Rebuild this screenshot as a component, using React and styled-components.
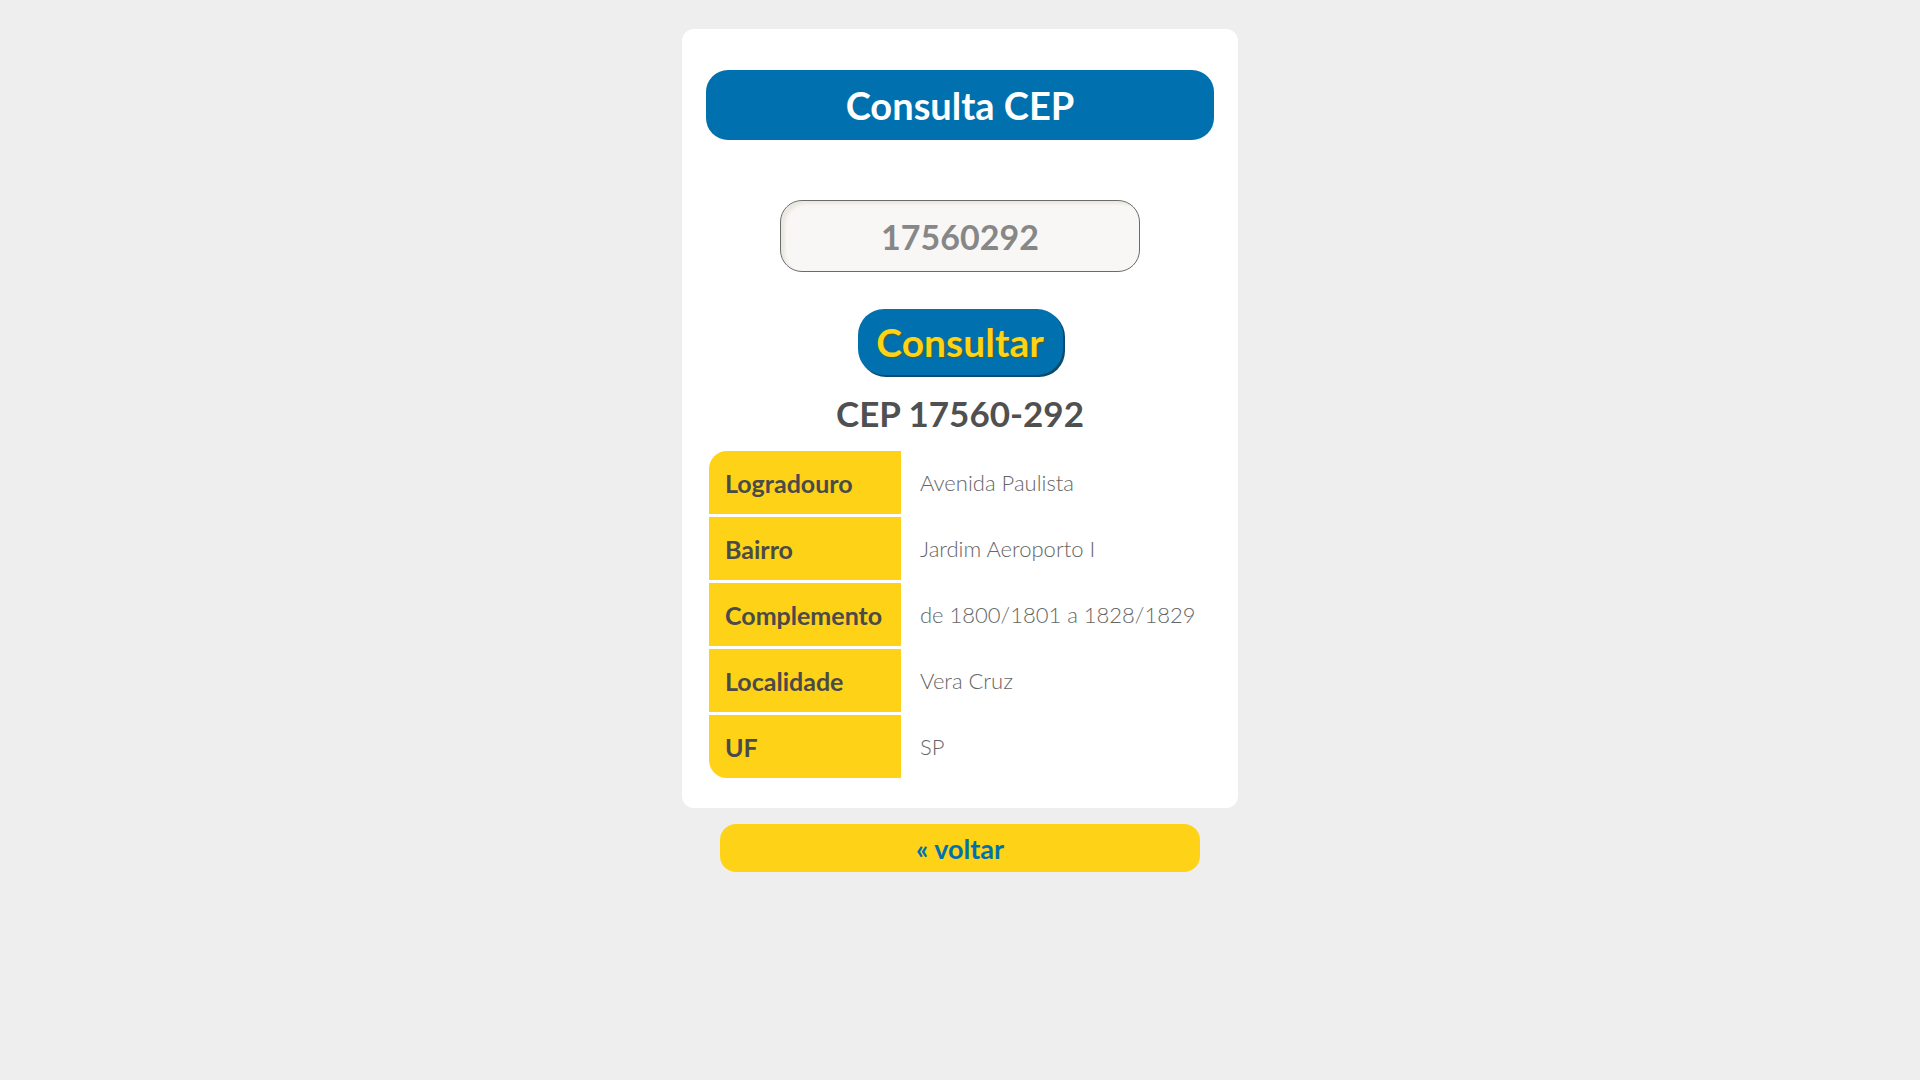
import React from 'react'
import styled, { createGlobalStyle } from 'styled-components'

const GlobalStyle = createGlobalStyle`
  html, body {
    margin: 0;
    padding: 0;
    background: #eeeeee;
    font-family: Lato, "Open Sans", sans-serif;
  }
`

const Page = styled.div`
  min-height: 1080px;
  display: flex;
  flex-direction: column;
  align-items: center;
  padding-top: 29px;
  box-sizing: border-box;
`

const Card = styled.div`
  width: 556px;
  box-sizing: border-box;
  background: #ffffff;
  border-radius: 12px;
  padding: 41px 24px 27px;
  display: flex;
  flex-direction: column;
  align-items: center;
`

const Title = styled.h1`
  margin: 0;
  width: 100%;
  height: 70px;
  border-radius: 22px;
  background: #0071ae;
  color: #ffffff;
  font-size: 38px;
  font-weight: 700;
  display: flex;
  align-items: center;
  justify-content: center;
`

const CepInput = styled.input`
  margin-top: 60px;
  width: 360px;
  height: 72px;
  box-sizing: border-box;
  border: 1px solid #6b6b6b;
  border-radius: 22px;
  background: #f8f7f5;
  box-shadow: inset 4px 3px 3px #ebe8e1;
  text-align: center;
  font-family: inherit;
  font-size: 34px;
  font-weight: 700;
  color: #878787;
  outline: none;
`

const SearchButton = styled.button`
  margin-top: 37px;
  width: 205px;
  height: 66px;
  border: none;
  border-radius: 26px;
  background: #0071ae;
  box-shadow: 2px 2px 0 #0b4a6e;
  color: #fdd217;
  font-family: inherit;
  font-size: 39px;
  font-weight: 700;
  text-shadow: 1px 1px 1px #5a5a20;
  cursor: pointer;
`

const CepHeading = styled.h2`
  margin: 17px 0 14px;
  font-size: 35px;
  font-weight: 700;
  color: #505050;
`

const InfoTable = styled.table`
  width: 100%;
  table-layout: fixed;
  border-spacing: 3px;
`

const LabelCell = styled.th`
  width: 192px;
  height: 63px;
  box-sizing: border-box;
  padding: 0 0 0 16px;
  background: #fdd217;
  color: #4a4a4a;
  font-size: 25px;
  font-weight: 700;
  text-align: left;
  white-space: nowrap;
  border-radius: ${p => p.$first ? '18px 0 0 0' : p.$last ? '0 0 0 18px' : '0'};
`

const ValueCell = styled.td`
  padding: 0 0 0 16px;
  color: #666666;
  font-size: 22px;
  font-weight: 300;
  white-space: nowrap;
`

const BackButton = styled.a`
  margin-top: 16px;
  width: 480px;
  height: 48px;
  border-radius: 16px;
  background: #fdd217;
  color: #0071ae;
  font-size: 27px;
  font-weight: 700;
  display: flex;
  align-items: center;
  justify-content: center;
  text-decoration: none;
  cursor: pointer;
`

const rows = [
  ['Logradouro', 'Avenida Paulista'],
  ['Bairro', 'Jardim Aeroporto I'],
  ['Complemento', 'de 1800/1801 a 1828/1829'],
  ['Localidade', 'Vera Cruz'],
  ['UF', 'SP'],
]

export default function App() {
  return (
    <Page>
      <GlobalStyle />
      <Card>
        <Title>Consulta CEP</Title>
        <CepInput defaultValue="17560292" />
        <SearchButton>Consultar</SearchButton>
        <CepHeading>CEP 17560-292</CepHeading>
        <InfoTable>
          <tbody>
            {rows.map(([label, value], i) => (
              <tr key={label}>
                <LabelCell $first={i === 0} $last={i === rows.length - 1}>{label}</LabelCell>
                <ValueCell>{value}</ValueCell>
              </tr>
            ))}
          </tbody>
        </InfoTable>
      </Card>
      <BackButton>« voltar</BackButton>
    </Page>
  )
}
